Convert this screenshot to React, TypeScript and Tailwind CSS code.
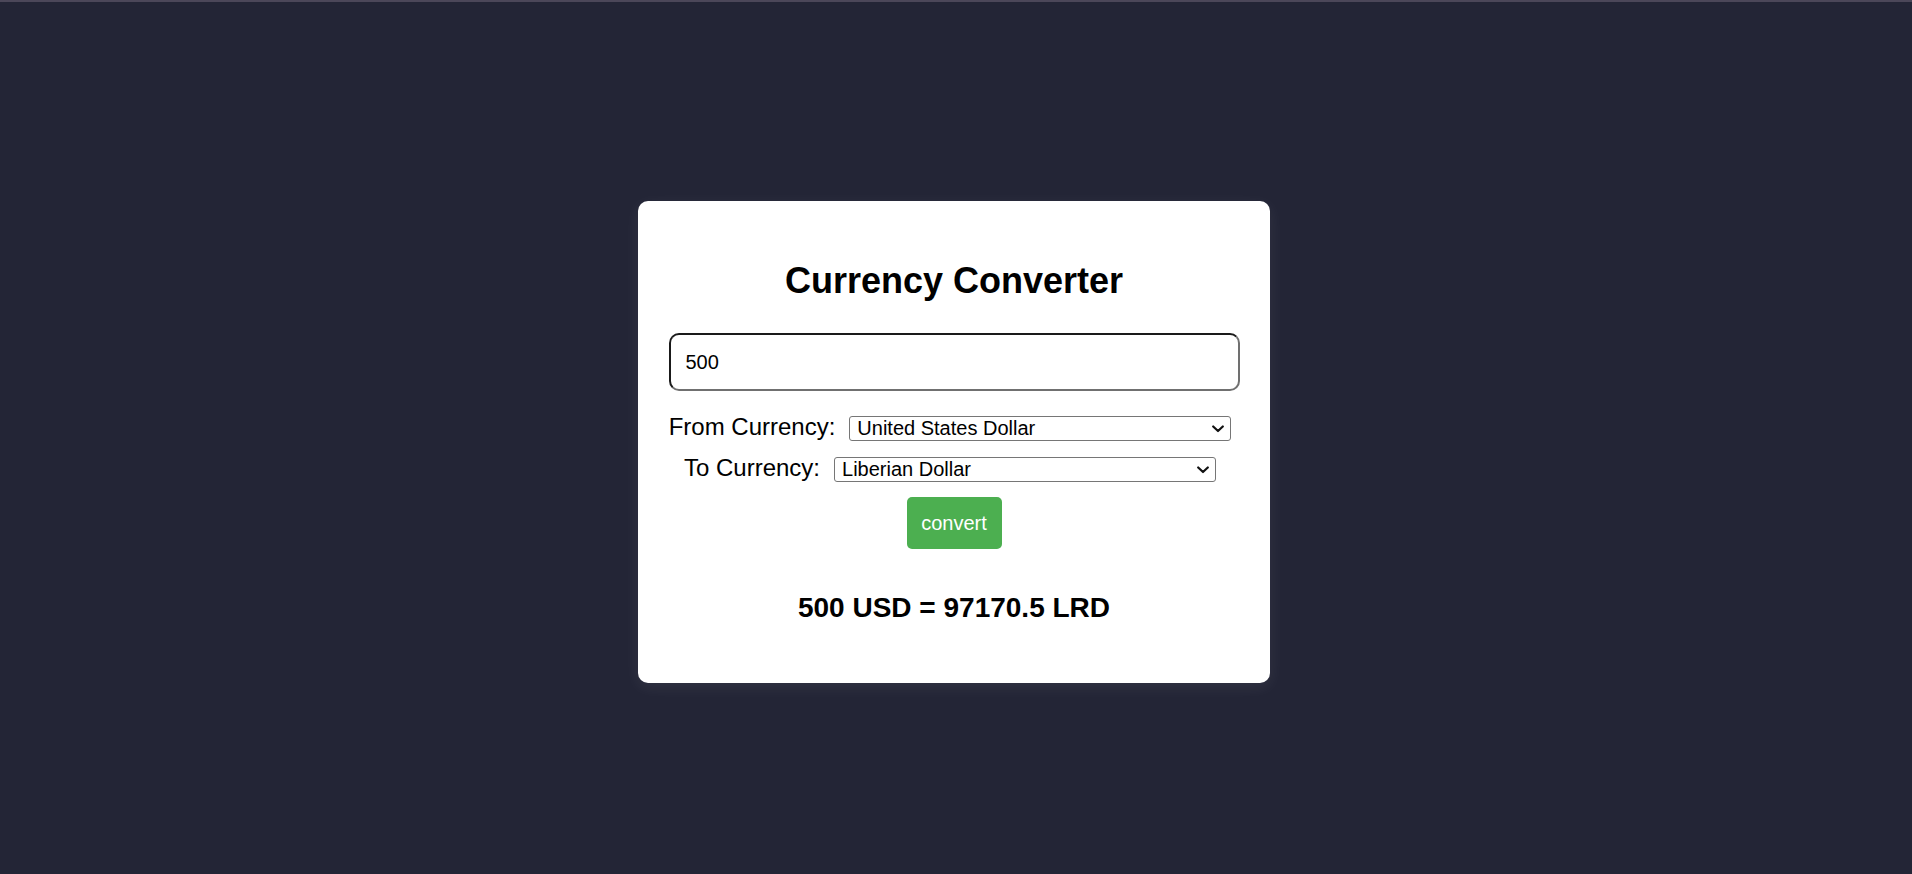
import React, { useState } from "react";

const FONT = { fontFamily: '"Liberation Sans", Arial, sans-serif' };

function Chevron() {
  return (
    <svg width="12" height="8" viewBox="0 0 12 8" className="pointer-events-none absolute right-[7px] top-1/2 -translate-y-1/2">
      <path d="M1.2 1.5 L6 6 L10.8 1.5" fill="none" stroke="#111" strokeWidth="2.2" strokeLinecap="round" strokeLinejoin="round" />
    </svg>
  );
}

function Select({ value, options }: { value: string; options: string[] }) {
  const [v, setV] = useState(value);
  return (
    <div className="relative w-[382px] h-[25px]">
      <select
        value={v}
        onChange={(e) => setV(e.target.value)}
        className="appearance-none w-full h-full border border-[#767676] rounded-[3px] bg-white pl-[7px] pr-[24px] text-[20px] leading-[23px] text-black outline-none"
        style={FONT}
      >
        {options.map((o) => (
          <option key={o} value={o}>{o}</option>
        ))}
      </select>
      <Chevron />
    </div>
  );
}

export default function App() {
  const currencies = ["United States Dollar", "Liberian Dollar", "Euro", "British Pound"];
  return (
    <div className="w-[1912px] h-[874px] bg-[#232536] overflow-hidden" style={FONT}>
      <div className="h-[2px] bg-[#4b4759]" />
      <div className="h-[872px] flex items-center justify-center pt-[8px] pr-[4px]">
        <div className="w-[632px] bg-white rounded-[10px] px-[30px] pt-[30px] pb-[30px] flex flex-col items-center shadow-[0_4px_16px_rgba(255,255,255,0.07)]">
          <h1 className="mt-[30px] text-[36px] leading-[40px] font-bold text-black">Currency Converter</h1>
          <input
            defaultValue="500"
            className="mt-[32px] w-[571px] h-[58px] rounded-[10px] border-2 border-t-[#1a1a1a] border-l-[#1a1a1a] border-b-[#707070] border-r-[#707070] px-[15px] text-[20px] text-black outline-none bg-white"
            style={FONT}
          />
          <div className="mt-[25px] w-full flex justify-center items-center gap-[14px] pr-[8px] h-[25px]">
            <label className="text-[24px] leading-[26px] text-black mb-[4px] whitespace-nowrap">From Currency:</label>
            <Select value="United States Dollar" options={currencies} />
          </div>
          <div className="mt-[16px] w-full flex justify-center items-center gap-[14px] pr-[8px] h-[25px]">
            <label className="text-[24px] leading-[26px] text-black mb-[4px] whitespace-nowrap">To Currency:</label>
            <Select value="Liberian Dollar" options={currencies} />
          </div>
          <button
            className="mt-[15px] h-[52px] w-[95px] bg-[#4caf50] rounded-[5px] text-white text-[20px] leading-[22px] flex items-center justify-center"
            style={FONT}
          >
            convert
          </button>
          <div className="mt-[43px] mb-[29px] text-[28px] leading-[32px] font-bold text-black">500 USD = 97170.5 LRD</div>
        </div>
      </div>
    </div>
  );
}
